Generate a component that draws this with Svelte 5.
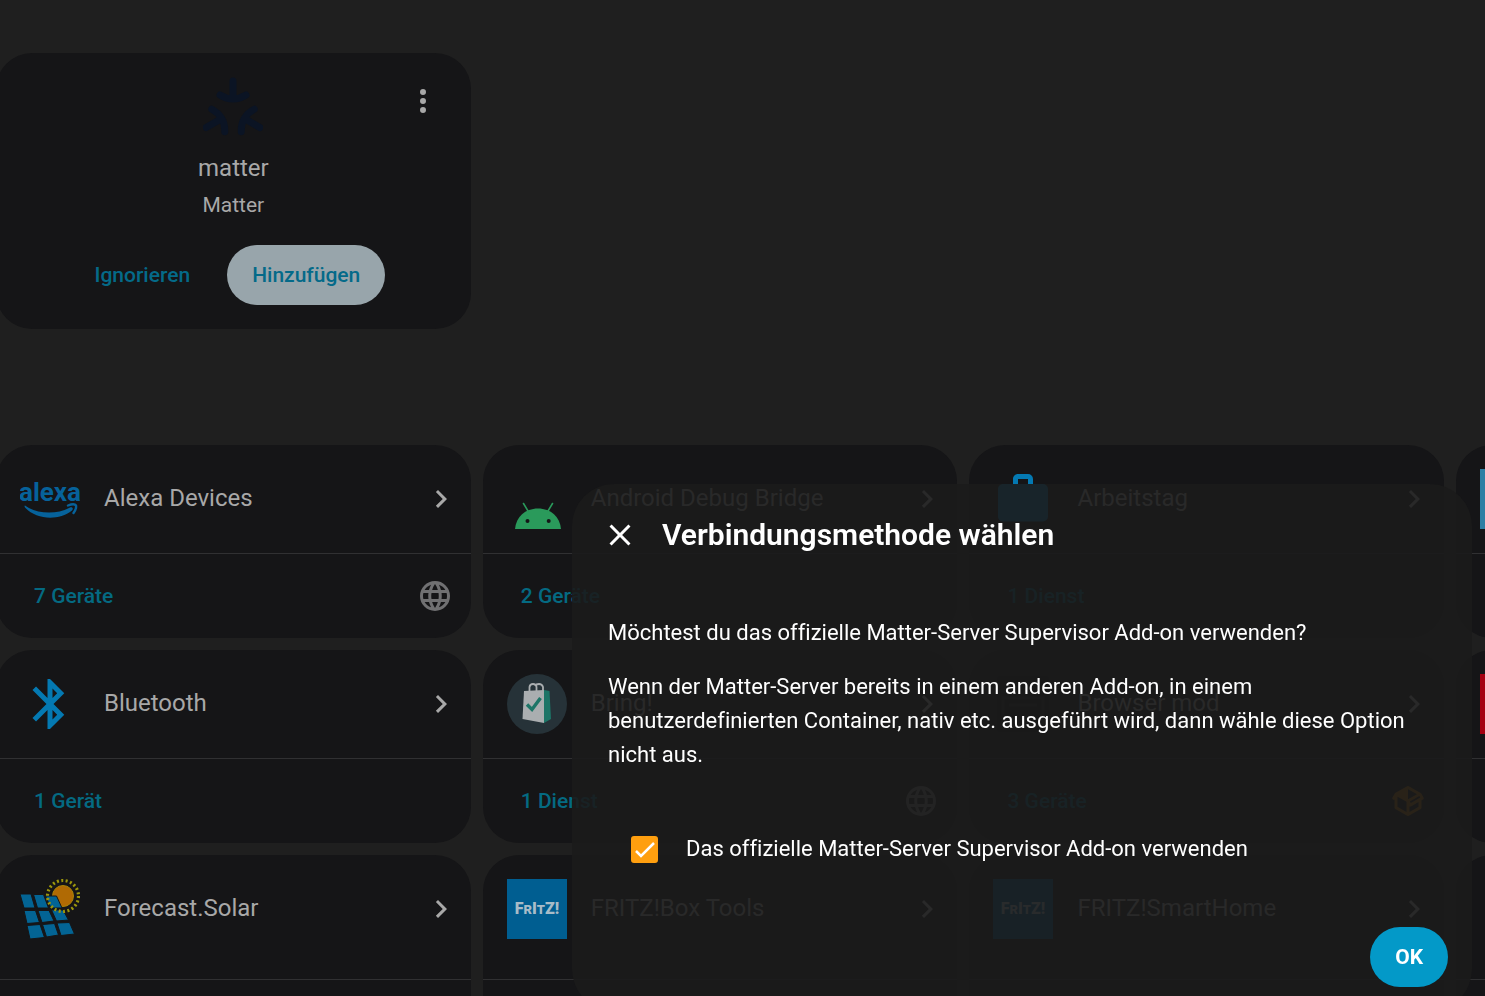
<script>
  const icons = {
    dots: 'M12,16A2,2 0 0,1 14,18A2,2 0 0,1 12,20A2,2 0 0,1 10,18A2,2 0 0,1 12,16M12,10A2,2 0 0,1 14,12A2,2 0 0,1 12,14A2,2 0 0,1 10,12A2,2 0 0,1 12,10M12,4A2,2 0 0,1 14,6A2,2 0 0,1 12,8A2,2 0 0,1 10,6A2,2 0 0,1 12,4Z',
    chevron: 'M8.59,16.58L13.17,12L8.59,7.41L10,6L16,12L10,18L8.59,16.58Z',
    close: 'M19,6.41L17.59,5L12,10.59L6.41,5L5,6.41L10.59,12L5,17.59L6.41,19L12,13.41L17.59,19L19,17.59L13.41,12L19,6.41Z',
    cloud: 'M16.36,14C16.44,13.34 16.5,12.68 16.5,12C16.5,11.32 16.44,10.66 16.36,10H19.74C19.9,10.64 20,11.31 20,12C20,12.69 19.9,13.36 19.74,14M14.59,19.56C15.19,18.45 15.65,17.25 15.97,16H18.92C17.96,17.65 16.43,18.93 14.59,19.56M14.34,14H9.66C9.56,13.34 9.5,12.68 9.5,12C9.5,11.32 9.56,10.65 9.66,10H14.34C14.43,10.65 14.5,11.32 14.5,12C14.5,12.68 14.43,13.34 14.34,14M12,19.96C11.17,18.76 10.5,17.43 10.09,16H13.91C13.5,17.43 12.83,18.76 12,19.96M8,8H5.08C6.03,6.34 7.57,5.06 9.4,4.44C8.8,5.55 8.35,6.75 8,8M5.08,16H8C8.35,17.25 8.8,18.45 9.4,19.56C7.57,18.93 6.03,17.65 5.08,16M4.26,14C4.1,13.36 4,12.69 4,12C4,11.31 4.1,10.64 4.26,10H7.64C7.56,10.66 7.5,11.32 7.5,12C7.5,12.68 7.56,13.34 7.64,14M12,4.03C12.83,5.23 13.5,6.57 13.91,8H10.09C10.5,6.57 11.17,5.23 12,4.03M18.92,8H15.97C15.65,6.75 15.19,5.55 14.59,4.44C16.43,5.07 17.96,6.34 18.92,8M12,2C6.47,2 2,6.5 2,12A10,10 0 0,0 12,22A10,10 0 0,0 22,12A10,10 0 0,0 12,2Z',
    custom: 'M2,10.96C1.5,10.68 1.35,10.07 1.63,9.59L3.13,7C3.24,6.8 3.41,6.66 3.6,6.58L11.43,2.18C11.59,2.06 11.79,2 12,2C12.21,2 12.41,2.06 12.57,2.18L20.47,6.62C20.66,6.72 20.82,6.88 20.91,7.08L22.36,9.6C22.64,10.08 22.47,10.69 22,10.96L21,11.54V16.5C21,16.88 20.79,17.21 20.47,17.38L12.57,21.82C12.41,21.94 12.21,22 12,22C11.79,22 11.59,21.94 11.43,21.82L3.53,17.38C3.21,17.21 3,16.88 3,16.5V10.96C2.7,11.13 2.32,11.14 2,10.96M12,4.15V10.85L17.96,7.5L12,4.15M5,15.91L11,19.29V12.58L5,9.21V15.91M19,15.91V12.69L14,15.59C13.67,15.77 13.3,15.76 13,15.6V19.29L19,15.91M13.85,13.36L20.13,9.73L19.55,8.72L13.27,12.35L13.85,13.36Z'
  };

  const integrations = [
    { logo: 'alexa', name: 'Alexa Devices', link: '7 Geräte', badge: 'cloud' },
    { logo: 'android', name: 'Android Debug Bridge', link: '2 Geräte' },
    { logo: 'workday', name: 'Arbeitstag', link: '1 Dienst' },
    { logo: 'blue' },
    { logo: 'bluetooth', name: 'Bluetooth', link: '1 Gerät' },
    { logo: 'bring', name: 'Bring!', link: '1 Dienst', badge: 'cloud' },
    { logo: 'browser', name: 'Browser mod', link: '3 Geräte', badge: 'custom' },
    { logo: 'red' },
    { logo: 'solar', name: 'Forecast.Solar' },
    { logo: 'fritz', name: 'FRITZ!Box Tools' },
    { logo: 'fritz', name: 'FRITZ!SmartHome' },
    { logo: 'none' }
  ];

  let useAddon = $state(true);
</script>

{#snippet icon(name)}
  <svg class="icon" viewBox="0 0 24 24" aria-hidden="true"><path d={icons[name]} fill-rule="evenodd" /></svg>
{/snippet}

{#snippet logo(name)}
  <svg class="logo" viewBox="0 0 60 60" aria-hidden="true">
    {#if name === 'alexa'}
      <text x="30" y="32" class="alexa" text-anchor="middle">alexa</text>
      <path fill="#06629b" d="M5 36.5C16 45 37 46 50 38.500C52 37.500 54 39.500 52 41.500C38 52.500 16 50.500 5 38.500Q4 36.500 5 36.500Z" />
      <path fill="none" stroke="#06629b" stroke-width="2.4" stroke-linecap="round" d="M48 36.5C52 35 55 35 56 36.5C56.5 39 55 42 53.5 44" />
    {:else if name === 'android'}
      <path fill="#2a9a5b" d="M8 60C9 48 18 39.5 31 39.5S53 48 54 60Z" />
      <path stroke="#2a9a5b" stroke-width="1.6" stroke-linecap="round" d="M16.5 34.5L21 42M45.5 34.5L41 42" />
      <circle cx="20.5" cy="52" r="2" fill="#151517" />
      <circle cx="41.7" cy="52" r="2" fill="#151517" />
    {:else if name === 'workday'}
      <path fill="#0479b2" transform="scale(2.5)" d="M10,2H14A2,2 0 0,1 16,4V6H20A2,2 0 0,1 22,8V19A2,2 0 0,1 20,21H4C2.89,21 2,20.1 2,19V8C2,6.89 2.89,6 4,6H8V4C8,2.89 8.89,2 10,2M14,6V4H10V6H14Z" />
    {:else if name === 'bluetooth'}
      <path fill="#0479b2" transform="scale(2.5)" d="M14.88,16.29L13,18.17V14.41M13,5.83L14.88,7.71L13,9.58M17.71,7.71L12,2H11V9.58L6.41,5L5,6.41L10.59,12L5,17.58L6.41,19L11,14.41V22H12L17.71,16.29L13.41,12L17.71,7.71Z" />
    {:else if name === 'bring'}
      <circle cx="30" cy="30" r="30" fill="#263238" />
      <path fill="#1d7567" d="M37 16L42.5 17L44 45L37 49Z" />
      <path fill="#aaaeb0" d="M17 17L37 16L37 49L15.5 45Z" />
      <path fill="none" stroke="#aaaeb0" stroke-width="1.8" d="M22.5 17V13Q23 10 26 10T29.5 13V17M28 12Q29 10 32 10T36 13V17" />
      <path fill="none" stroke="#1d7567" stroke-width="3.4" d="M20 30.5L25 35.5L33.5 24" />
    {:else if name === 'browser'}
      <rect x="4" y="2" width="52" height="56" rx="4" fill="#101012" />
      <path fill="none" stroke="#242426" stroke-width="3" d="M10 24H50V52H10ZM16 31H44" />
    {:else if name === 'solar'}
      <circle cx="43" cy="17" r="10.5" fill="#b06a04" stroke="#a98308" />
      <path fill="#036494" stroke="#151517" d="M0 15H11L15 29H4ZM13.5 15.5H23.5L28.5 29H17.5ZM25.5 17H36.5L42 29H31ZM4 31.5H15.5L19.5 43.5L7 44.5ZM18 31.5H29L34 42L22 43.5ZM31.5 31H43L48.5 41L36.5 42ZM7 46.5L20 45.5L24.5 58.5L10 60ZM22.5 45.5L34.5 44.5L38.5 56L26.5 58ZM37 44L49.5 43.5L54.5 55L41 56.5Z" />
      <circle cx="43" cy="17" r="15.5" fill="none" stroke="#9c960c" stroke-width="3.2" stroke-dasharray="2 2.427" />
    {:else if name === 'fritz'}
      <rect width="60" height="60" fill="#005e91" />
      <text x="30" y="35" class="fritz" text-anchor="middle">F<tspan class="small">R</tspan>I<tspan class="small">T</tspan>Z!</text>
    {:else if name === 'blue'}
      <rect width="60" height="60" fill="#2e7fa4" />
    {:else if name === 'red'}
      <rect width="60" height="60" fill="#a50011" />
    {:else if name === 'matter'}
      <g fill="none" stroke="#0b1424" stroke-width="7" stroke-linecap="round">
        <path d="M30 4V21M17 18Q30 26 43 18" />
        <path d="M30 4V21M17 18Q30 26 43 18" transform="rotate(120 30 35)" />
        <path d="M30 4V21M17 18Q30 26 43 18" transform="rotate(240 30 35)" />
      </g>
    {/if}
  </svg>
{/snippet}

<main>
  <section class="grid">
    <article class="card discovered">
      <button class="menu" aria-label="Menü">{@render icon('dots')}</button>
      {@render logo('matter')}
      <h2>matter</h2>
      <h3>Matter</h3>
      <div class="actions">
        <button class="btn">Ignorieren</button>
        <button class="btn filled">Hinzufügen</button>
      </div>
    </article>
  </section>

  <section class="grid">
    {#each integrations as item}
      <article class="card">
        <header>
          {@render logo(item.logo)}
          {#if item.name}
            <h2>{item.name}</h2>
            <button class="next" aria-label="{item.name} öffnen">{@render icon('chevron')}</button>
          {/if}
        </header>
        <footer>
          {#if item.link}
            <a href="#devices">{item.link}</a>
          {/if}
          {#if item.badge}
            <span class={item.badge}>{@render icon(item.badge)}</span>
          {/if}
        </footer>
      </article>
    {/each}
  </section>
</main>

<div class="dialog" role="dialog" aria-labelledby="dialog-title">
  <div class="title">
    <button aria-label="Schließen">{@render icon('close')}</button>
    <h1 id="dialog-title">Verbindungsmethode wählen</h1>
  </div>
  <div class="content">
    <p>Möchtest du das offizielle Matter-Server Supervisor Add-on verwenden?</p>
    <p>
      Wenn der Matter-Server bereits in einem anderen Add-on, in einem benutzerdefinierten
      Container, nativ etc. ausgeführt wird, dann wähle diese Option nicht aus.
    </p>
    <label>
      <input type="checkbox" bind:checked={useAddon} />
      Das offizielle Matter-Server Supervisor Add-on verwenden
    </label>
  </div>
  <div class="buttons">
    <button class="btn ok">OK</button>
  </div>
</div>

<style>
  :global(body) {
    margin: 0;
    background: #1f1f1f;
  }

  main,
  .dialog {
    font-family: Roboto, "Noto Sans", sans-serif;
    font-size: 21px;
  }

  main {
    box-sizing: border-box;
    height: 100vh;
    overflow: hidden;
    padding-top: 53px;
    color: #a8a8a8;
  }

  h1,
  h2,
  h3,
  p {
    margin: 0;
  }

  button {
    border: 0;
    padding: 0;
    background: none;
    color: inherit;
    font: inherit;
    cursor: pointer;
  }

  .icon {
    display: block;
    width: 36px;
    height: 36px;
    fill: currentColor;
  }

  .logo {
    flex: none;
    width: 60px;
    height: 60px;
  }

  /* four columns, the last one runs out of the window */
  .grid {
    display: grid;
    grid-template-columns: repeat(4, 1fr);
    gap: 12px;
    width: 130.3%;
    margin: 0 0 116px -4px;
  }

  .card {
    display: flex;
    flex-direction: column;
    border-radius: 36px;
    background: #151517;
  }

  .discovered {
    position: relative;
    align-items: center;
    padding: 24px;
  }

  .menu {
    position: absolute;
    top: 30px;
    right: 30px;
  }

  h2 {
    font-size: 24px;
    font-weight: 400;
    line-height: 36px;
  }

  h3 {
    font-size: 21px;
    font-weight: 400;
    line-height: 32px;
  }

  .discovered h2 {
    margin: 13px 0 3px;
  }

  .actions {
    display: flex;
    gap: 12px;
    margin-top: 24px;
    padding-right: 12px;
  }

  .btn {
    height: 60px;
    padding: 0 25px;
    border-radius: 30px;
    color: #046a89;
    font-weight: 500;
  }

  .filled {
    background: #98a5ab;
  }

  header {
    display: flex;
    flex: 1;
    align-items: flex-start;
    padding: 24px 12px 24px 24px;
  }

  header h2 {
    flex: 1;
    margin: 11px 0 0 24px;
  }

  .next {
    margin-top: 12px;
  }

  footer {
    display: flex;
    align-items: center;
    justify-content: space-between;
    box-sizing: border-box;
    height: 85px;
    border-top: 1px solid #303032;
    padding: 0 18px 0 38px;
  }

  .card:nth-child(n + 9) header {
    padding-bottom: 40px;
  }

  a {
    color: #046a82;
    font-weight: 500;
    text-decoration: none;
  }

  .cloud {
    color: #707072;
  }

  .custom {
    color: #a86a08;
  }

  .alexa {
    fill: #06629b;
    font: 700 26px Roboto, sans-serif;
  }

  .fritz {
    fill: #a8bcc8;
    font: 900 16px Roboto, sans-serif;
  }

  .small {
    font-size: 13px;
  }

  .dialog {
    position: fixed;
    top: 484px;
    right: 13px;
    box-sizing: border-box;
    width: min(900px, 100% - 26px);
    border-radius: 42px;
    padding: 24px;
    background: rgba(27, 27, 27, 0.9);
    color: #fff;
  }

  .title {
    display: flex;
    align-items: center;
    gap: 24px;
    padding: 0 6px;
    height: 54px;
  }

  h1 {
    font-size: 30px;
    font-weight: 600;
    line-height: 36px;
  }

  .content {
    padding: 54px 12px 61px;
    font-size: 22px;
    font-variant-ligatures: none;
    line-height: 34px;
  }

  p {
    margin-bottom: 20px;
  }

  label {
    display: flex;
    align-items: center;
    gap: 28px;
    margin-top: 60px;
    padding-left: 23px;
  }

  input {
    appearance: none;
    width: 27px;
    height: 27px;
    margin: 0;
    border: 2px solid #ff9f0f;
    border-radius: 3px;
  }

  input:checked {
    background: #ff9f0f url("data:image/svg+xml,%3Csvg xmlns='http://www.w3.org/2000/svg' viewBox='0 0 27 27'%3E%3Cpath d='M5 15l5 5L23 7' fill='none' stroke='white' stroke-width='2.5'/%3E%3C/svg%3E") center / 27px;
  }

  .buttons {
    display: flex;
    justify-content: flex-end;
  }

  .ok {
    background: #0399c8;
    color: #fff;
    font-weight: 700;
  }
</style>
